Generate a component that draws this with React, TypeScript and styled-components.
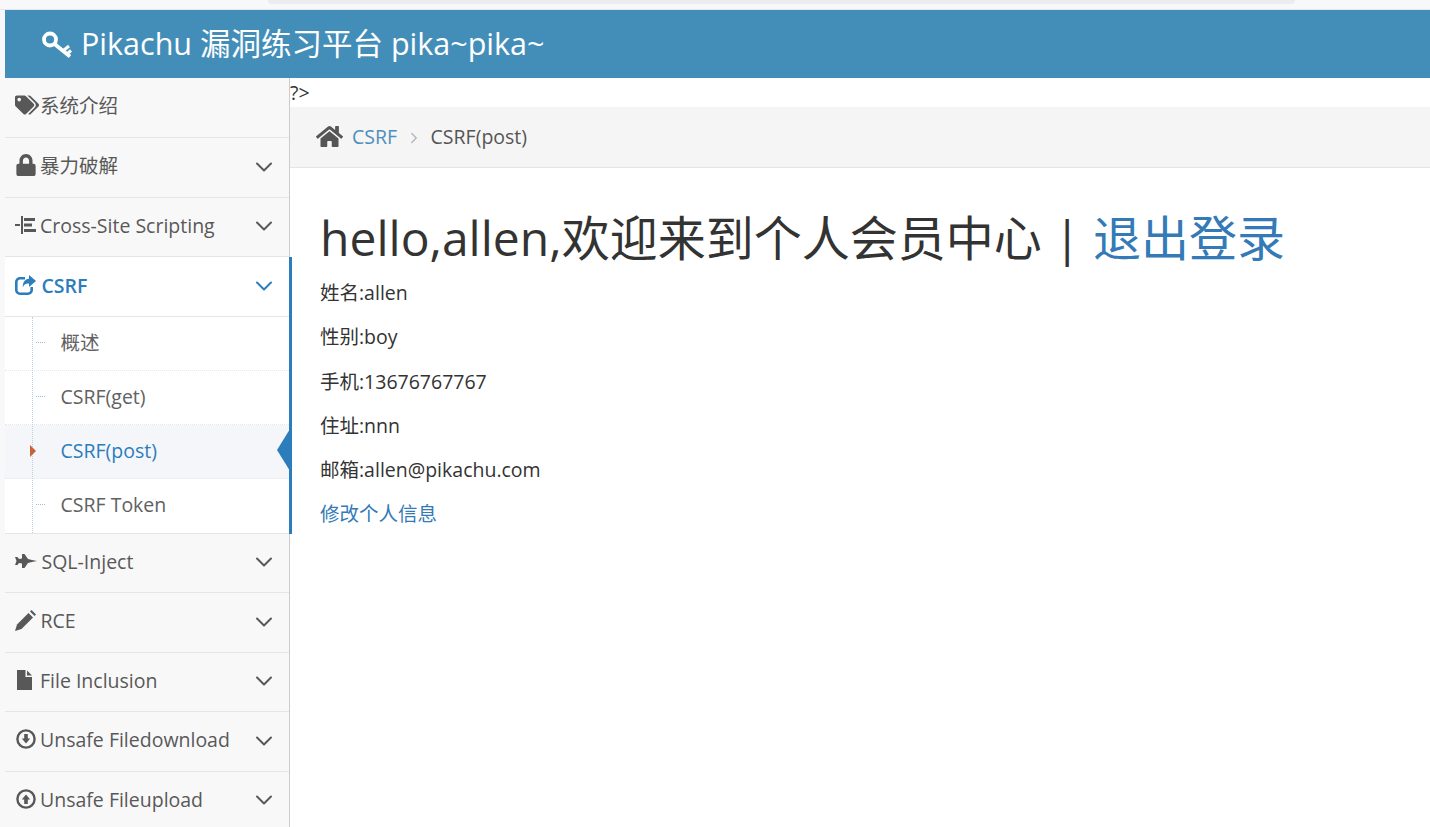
import { ReactNode } from "react";
import styled, { createGlobalStyle } from "styled-components";
import { FaTags, FaLock, FaHome } from "react-icons/fa";
import { ChevronDown, ChevronRight } from "lucide-react";

const GlobalStyle = createGlobalStyle`
  html, body {
    margin: 0;
    height: 100%;
    overflow: hidden;
    background: #f8f8fb;
  }
  body {
    font-family: "Open Sans", "Noto Sans CJK SC", sans-serif;
    font-size: 19.5px;
    line-height: 1.5;
    color: #393939;
  }
  * { box-sizing: border-box; }
`;

const TopStrip = styled.div`
  height: 10px;
  padding-left: 268px;
  border-bottom: 1px solid #e6e6e8;
  background: #f8f8fb;
`;

const TabBar = styled.div`
  width: 1027px;
  height: 4px;
  background: #ececef;
  border-bottom-left-radius: 6px;
  border-bottom-right-radius: 6px;
`;

const Page = styled.div`
  margin-left: 5px;
  height: 817px;
  display: flex;
  flex-direction: column;
  background: #fff;
`;

const Header = styled.header`
  height: 68px;
  flex: none;
  display: flex;
  align-items: center;
  gap: 8px;
  padding-left: 37px;
  background: #438eb9;
  color: #fff;
  font-size: 30.5px;
`;

const Body = styled.div`
  flex: 1;
  display: flex;
  min-height: 0;
`;

const Sidebar = styled.nav`
  width: 285px;
  flex: none;
  background: #f8f8f8;
  border-right: 1px solid #ccc;
`;

const Item = styled.div<{ $active?: boolean; $h?: number }>`
  position: relative;
  height: ${(p) => p.$h ?? 59.5}px;
  display: flex;
  align-items: center;
  padding: 0 11.5px 1px 10px;
  border-bottom: 1px solid #e5e5e5;
  background: ${(p) => (p.$active ? "#fff" : "#f8f8f8")};
  color: ${(p) => (p.$active ? "#2b7dbc" : "#585858")};
  font-weight: ${(p) => (p.$active ? 600 : 400)};
  white-space: nowrap;
`;

const IconSlot = styled.span<{ $w?: number }>`
  width: ${(p) => p.$w ?? 25}px;
  flex: none;
  display: flex;
  align-items: center;
  margin-top: -3px;
`;

const Label = styled.span`
  flex: 1;
  margin-top: -2px;
`;

const Group = styled.div`
  position: relative;
  &::after {
    content: "";
    position: absolute;
    top: 0;
    bottom: 0;
    right: -3px;
    width: 3px;
    background: #2b7dbc;
  }
`;

const SubMenu = styled.div`
  position: relative;
  background: #fff;
  border-bottom: 1px solid #e5e5e5;
  &::before {
    content: "";
    position: absolute;
    z-index: 1;
    left: 27px;
    top: 0;
    bottom: 0;
    border-left: 1px dotted #bcd0e2;
  }
`;

const SubItem = styled.div<{ $active?: boolean; $last?: boolean }>`
  position: relative;
  height: 53.85px;
  display: flex;
  align-items: center;
  padding: 0 0 1.5px 55.5px;
  border-bottom: ${(p) => (p.$last ? "none" : "1px dotted #e8e8e8")};
  background: ${(p) => (p.$active ? "#f4f6f9" : "#fff")};
  color: ${(p) => (p.$active ? "#2b7dbc" : "#616161")};

  &::before {
    content: "";
    position: absolute;
    left: 31px;
    top: 25px;
    width: 9px;
    border-top: 1px dotted #9dbdd6;
    display: ${(p) => (p.$active ? "none" : "block")};
  }
`;

const Caret = styled.span`
  position: absolute;
  z-index: 2;
  left: 25px;
  top: 20px;
  width: 0;
  height: 0;
  border-left: 6px solid #c86139;
  border-top: 6px solid transparent;
  border-bottom: 6px solid transparent;
`;

const ActiveArrow = styled.span`
  position: absolute;
  right: -1px;
  top: 4px;
  width: 0;
  height: 0;
  border-right: 13px solid #2b7dbc;
  border-top: 21px solid transparent;
  border-bottom: 21px solid transparent;
`;

const Main = styled.main`
  flex: 1;
  min-width: 0;
  background: #fff;
  color: #393939;
`;

const RawText = styled.div`
  height: 29.25px;
  color: #333;
`;

const Breadcrumbs = styled.div`
  height: 61px;
  display: flex;
  align-items: center;
  padding: 0 0 2px 26px;
  background: #f5f5f5;
  border-bottom: 1px solid #e5e5e5;
  color: #555;
`;

const CrumbLink = styled.a`
  color: #4c8fbd;
  margin-left: 9px;
`;

const CrumbSep = styled.span`
  display: flex;
  margin: 4px 7.5px 0 8px;
  color: #b2b6bf;
`;

const Content = styled.div`
  padding: 39px 30px 0;
`;

const Title = styled.h1`
  margin: 0 0 8.4px;
  font-size: 48px;
  font-weight: 400;
  line-height: 1.3;
  white-space: nowrap;
  color: #333;
`;

const TitleLink = styled.a`
  color: #337ab7;
`;

const Row = styled.p`
  margin: 0 0 15px;
  color: #333;
`;

const PlainLink = styled.a`
  color: #337ab7;
  display: block;
`;

const KeyIcon = () => (
  <svg width="31" height="31" viewBox="0 0 31 31" fill="none" stroke="#fff">
    <circle cx="8" cy="10.5" r="6" strokeWidth="3.8" />
    <path d="M12.500 15L28 27.500" strokeWidth="3.8" />
    <path d="M21.500 21.500l5.500-4.500M25 25l4-3.500" strokeWidth="3" />
  </svg>
);

const ListIcon = () => (
  <svg width="22" height="20" viewBox="0 0 22 20" fill="#585858">
    <rect x="0" y="9" width="5" height="2" />
    <rect x="6" y="1" width="2" height="18" />
    <rect x="9" y="3" width="11" height="3" />
    <rect x="9" y="8.5" width="8" height="3" />
    <rect x="9" y="14" width="12" height="3" />
  </svg>
);

const ShareIcon = () => (
  <svg width="21" height="20" viewBox="0 0 21 20">
    <path
      d="M10 3.300H5a3.700 3.700 0 0 0-3.700 3.700v8A3.700 3.700 0 0 0 5 18.700h8a3.700 3.700 0 0 0 3.700-3.700v-3"
      fill="none"
      stroke="currentColor"
      strokeWidth="2.6"
    />
    <path
      d="M14 0l7 6-7 6V8.500c-3.200 0-5 .8-6.200 4C7.600 7 10 4 14 3.700z"
      fill="currentColor"
    />
  </svg>
);

const JetIcon = () => (
  <svg width="22" height="14" viewBox="0 0 22 14" fill="currentColor">
    <path d="M0 3h2.500l1.500 2 3-.5V0h2.500l3.500 5 4 1 5 1-5 1-4 1-3.500 5H7V9.500L4 9l-1.500 2H0l1.500-4z" />
  </svg>
);

const PencilIcon = () => (
  <svg width="21" height="21" viewBox="0 0 21 21" fill="currentColor">
    <path d="M0 21l2-6.500L13.500 3l4.500 4.500L6.500 19z" />
    <path d="M15 1.500L16.500 0 21 4.500 19.500 6z" />
  </svg>
);

const FileIcon = () => (
  <svg width="17" height="20" viewBox="0 0 17 20" fill="currentColor">
    <path d="M2 0h8.500v7H17v13H2z" />
    <path d="M12 .5L17 5.500h-5z" />
  </svg>
);

const CircleArrow = ({ up }: { up?: boolean }) => (
  <svg width="21" height="20" viewBox="0 0 21 20">
    <g transform={up ? "rotate(180 11 10)" : undefined}>
      <circle cx="11" cy="10" r="8.600" fill="none" stroke="currentColor" strokeWidth="2.400" />
      <path d="M9.200 5h3.600v4.500h2.400L11 14.500 6.800 9.500h2.400z" fill="currentColor" />
    </g>
  </svg>
);

type Entry = { icon: ReactNode; label: string; arrow?: boolean; w?: number };

const topEntries: Entry[] = [
  { icon: <FaTags size={24} />, label: "系统介绍" },
  { icon: <FaLock size={22} />, label: "暴力破解", arrow: true },
  { icon: <ListIcon />, label: "Cross-Site Scripting", arrow: true },
];

const bottomEntries: Entry[] = [
  { icon: <JetIcon />, label: "SQL-Inject", arrow: true, w: 26.5 },
  { icon: <PencilIcon />, label: "RCE", arrow: true, w: 25.5 },
  { icon: <FileIcon />, label: "File Inclusion", arrow: true },
  { icon: <CircleArrow />, label: "Unsafe Filedownload", arrow: true },
  { icon: <CircleArrow up />, label: "Unsafe Fileupload", arrow: true },
];

const subEntries = ["概述", "CSRF(get)", "CSRF(post)", "CSRF Token"];

const TOP_ITEM_H = 59.8;

const NavItem = ({ icon, label, arrow, w, h }: Entry & { h?: number }) => (
  <Item $h={h}>
    <IconSlot $w={w}>{icon}</IconSlot>
    <Label>{label}</Label>
    {arrow && <ChevronDown size={28} strokeWidth={1.7} />}
  </Item>
);

const profile = [
  "姓名:allen",
  "性别:boy",
  "手机:13676767767",
  "住址:nnn",
  "邮箱:allen@pikachu.com",
];

export default function App() {
  return (
    <>
      <GlobalStyle />
      <TopStrip>
        <TabBar />
      </TopStrip>
      <Page>
        <Header>
          <KeyIcon />
          <span>Pikachu 漏洞练习平台 pika~pika~</span>
        </Header>
        <Body>
          <Sidebar>
            {topEntries.map((e) => (
              <NavItem key={e.label} {...e} h={TOP_ITEM_H} />
            ))}
            <Group>
              <Item $active $h={TOP_ITEM_H}>
                <IconSlot $w={26.5}>
                  <ShareIcon />
                </IconSlot>
                <Label>CSRF</Label>
                <ChevronDown size={28} strokeWidth={1.7} />
              </Item>
              <SubMenu>
                {subEntries.map((s, i) => (
                  <SubItem key={s} $active={i === 2} $last={i === 3}>
                    {i === 2 && <Caret />}
                    {s}
                    {i === 2 && <ActiveArrow />}
                  </SubItem>
                ))}
              </SubMenu>
            </Group>
            {bottomEntries.map((e) => (
              <NavItem key={e.label} {...e} />
            ))}
          </Sidebar>
          <Main>
            <RawText>?&gt;</RawText>
            <Breadcrumbs>
              <FaHome size={27} />
              <CrumbLink>CSRF</CrumbLink>
              <CrumbSep>
                <ChevronRight size={18} strokeWidth={1.8} />
              </CrumbSep>
              CSRF(post)
            </Breadcrumbs>
            <Content>
              <Title>
                hello,allen,欢迎来到个人会员中心 | <TitleLink>退出登录</TitleLink>
              </Title>
              {profile.map((r) => (
                <Row key={r}>{r}</Row>
              ))}
              <PlainLink>修改个人信息</PlainLink>
            </Content>
          </Main>
        </Body>
      </Page>
    </>
  );
}
